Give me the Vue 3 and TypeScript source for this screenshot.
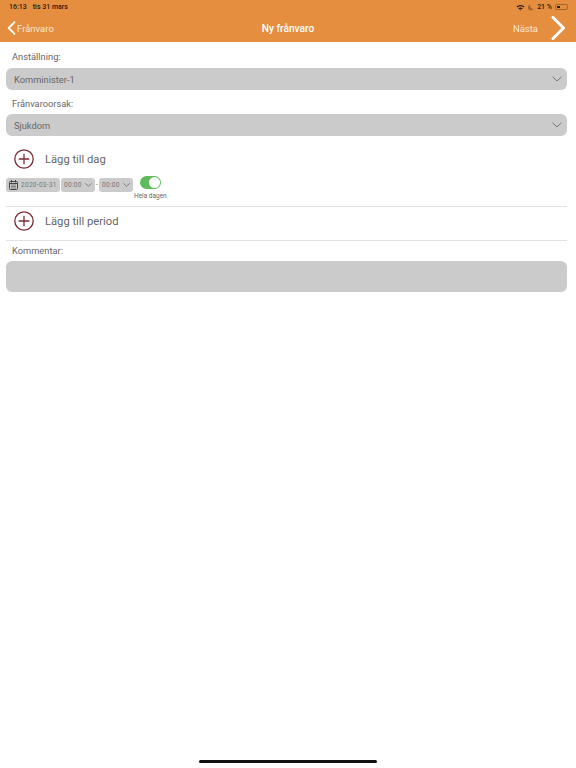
<template>
  <div class="page">
    <header class="header">
      <div class="status">
        <div class="status-left">
          <span>16:13</span>
          <span>tis 31 mars</span>
        </div>
        <div class="status-right">
          <svg class="wifi" width="9" height="7" viewBox="0 0 18 14">
            <path d="M1 5a12 12 0 0 1 16 0l-2 2.2a9 9 0 0 0-12 0z" fill="#222" />
            <path d="M4.6 8.6a7 7 0 0 1 8.8 0l-2 2.2a4 4 0 0 0-4.800 0z" fill="#222" />
            <path d="M7.800 12a2 2 0 0 1 2.400 0L9 13.600z" fill="#222" />
          </svg>
          <svg class="moon" width="6" height="7" viewBox="0 0 12 14">
            <path d="M5 1a6 6 0 1 0 6 9A6.500 6.500 0 0 1 5 1z" fill="#a8652a" />
          </svg>
          <span class="pct">21 %</span>
          <div class="battery"><div class="battery-fill"></div></div>
        </div>
      </div>
      <div class="nav">
        <div class="nav-back">
          <svg width="9" height="14" viewBox="0 0 9 14">
            <path d="M7.500 1.200 1.700 7l5.800 5.800" fill="none" stroke="#fff" stroke-width="1.800" stroke-linecap="round" stroke-linejoin="round" />
          </svg>
          <span>Frånvaro</span>
        </div>
        <div class="nav-title">Ny frånvaro</div>
        <div class="nav-next">
          <span>Nästa</span>
          <svg width="15" height="24" viewBox="0 0 15 24">
            <path d="M2 1.500 12.500 12 2 22.500" fill="none" stroke="#fff" stroke-width="3" stroke-linecap="round" stroke-linejoin="round" />
          </svg>
        </div>
      </div>
    </header>

    <main class="content">
      <label class="field-label first">Anställning:</label>
      <div class="select">
        <span>{{ employment }}</span>
        <svg class="chevron" width="10" height="6" viewBox="0 0 10 6">
          <path d="M.6.8 5 5 9.400.8" fill="none" stroke="#777" stroke-width="1" />
        </svg>
      </div>

      <label class="field-label second">Frånvaroorsak:</label>
      <div class="select">
        <span>{{ reason }}</span>
        <svg class="chevron" width="10" height="6" viewBox="0 0 10 6">
          <path d="M.6.8 5 5 9.400.8" fill="none" stroke="#777" stroke-width="1" />
        </svg>
      </div>

      <div class="add-row add-day">
        <svg class="plus" width="20" height="20" viewBox="0 0 20 20">
          <circle cx="10" cy="10" r="9.200" fill="none" stroke="#7b2c34" stroke-width="1.300" />
          <path d="M10 4.700v10.600M4.700 10h10.600" stroke="#7b2c34" stroke-width="1.300" />
        </svg>
        <span>Lägg till dag</span>
      </div>

      <div class="day-row">
        <div class="chip date-chip">
          <svg width="9" height="10" viewBox="0 0 9 10">
            <rect x=".5" y="1.500" width="8" height="8" rx="1" fill="none" stroke="#444" />
            <path d="M.5 3.500h8" stroke="#444" />
            <path d="M2.500 0v2.500M6.500 0v2.500" stroke="#444" />
            <path d="M2 5h5M2 6.500h5M2 8h5" stroke="#666" stroke-width=".7" />
          </svg>
          <span>2020-03-31</span>
        </div>
        <div class="chip time-chip">
          <span>00:00</span>
          <svg width="7" height="4" viewBox="0 0 7 4"><path d="M.4.4 3.500 3.300 6.600.4" fill="none" stroke="#777" stroke-width=".9" /></svg>
        </div>
        <span class="dash">-</span>
        <div class="chip time-chip">
          <span>00:00</span>
          <svg width="7" height="4" viewBox="0 0 7 4"><path d="M.4.4 3.500 3.300 6.600.4" fill="none" stroke="#777" stroke-width=".9" /></svg>
        </div>
        <div class="toggle-wrap">
          <div class="toggle"><div class="knob"></div></div>
          <span class="toggle-label">Hela dagen</span>
        </div>
      </div>

      <div class="divider"></div>

      <div class="add-row add-period">
        <svg class="plus" width="20" height="20" viewBox="0 0 20 20">
          <circle cx="10" cy="10" r="9.200" fill="none" stroke="#7b2c34" stroke-width="1.300" />
          <path d="M10 4.700v10.600M4.700 10h10.600" stroke="#7b2c34" stroke-width="1.300" />
        </svg>
        <span>Lägg till period</span>
      </div>

      <div class="divider"></div>

      <label class="field-label third">Kommentar:</label>
      <div class="comment"></div>
    </main>

    <div class="home-bar"></div>
  </div>
</template>

<script setup lang="ts">
const employment = 'Komminister-1'
const reason = 'Sjukdom'
</script>

<style scoped>
.page {
  position: relative;
  width: 576px;
  height: 768px;
  display: flex;
  flex-direction: column;
  background: #fff;
  font-family: Roboto, "Liberation Sans", sans-serif;
  overflow: hidden;
}

.header {
  height: 42px;
  background: #e58e3f;
  display: flex;
  flex-direction: column;
  flex-shrink: 0;
}

.status {
  height: 14px;
  padding: 0 8px 0 9px;
  display: flex;
  justify-content: space-between;
  align-items: center;
  font-size: 7px;
  font-weight: 500;
  color: #2a1a0c;
}

.status-left {
  display: flex;
  gap: 6px;
}

.status-right {
  display: flex;
  align-items: center;
  gap: 3px;
}

.battery {
  width: 13px;
  height: 6px;
  border: 1px solid #a8652a;
  border-radius: 2px;
  box-sizing: border-box;
  padding: 1px;
}

.battery-fill {
  width: 3px;
  height: 100%;
  background: #222;
}

.nav {
  flex: 1;
  display: flex;
  align-items: center;
  justify-content: space-between;
  padding: 0 10px 0 7px;
  color: #fff;
  position: relative;
  font-size: 9.500px;
}

.nav-back {
  display: flex;
  align-items: center;
  gap: 1px;
  color: #fbe6d2;
}

.nav-title {
  position: absolute;
  left: 0;
  right: 0;
  text-align: center;
  font-weight: 500;
  font-size: 10.200px;
  pointer-events: none;
}

.nav-next {
  display: flex;
  align-items: center;
  gap: 13px;
  color: #fbe6d2;
}

.content {
  display: flex;
  flex-direction: column;
  padding: 0 9px 0 6px;
}

.field-label {
  font-size: 9.300px;
  line-height: 12px;
  color: #666;
  padding-left: 6px;
}

.first {
  margin-top: 9px;
  margin-bottom: 5px;
}

.second {
  margin-top: 8px;
  margin-bottom: 4px;
}

.third {
  margin-top: 4px;
  margin-bottom: 4px;
}

.select {
  height: 22px;
  background: #cbcbcb;
  border-radius: 6px;
  display: flex;
  align-items: center;
  justify-content: space-between;
  padding: 0 5px 0 8px;
  font-size: 9.300px;
  color: #666;
}

.add-row {
  display: flex;
  align-items: center;
  gap: 11px;
  padding-left: 8px;
  font-size: 11.200px;
  color: #666;
}

.add-day {
  margin-top: 13px;
  height: 20px;
}

.add-period {
  margin-top: 4px;
  margin-bottom: 9px;
  height: 20px;
}

.day-row {
  display: flex;
  align-items: flex-start;
  margin-top: 9px;
  height: 28px;
}

.chip {
  height: 14px;
  background: #cbcbcb;
  border-radius: 3px;
  display: flex;
  align-items: center;
  font-size: 6.500px;
  letter-spacing: 0.3px;
  color: #777;
  box-sizing: border-box;
}

.date-chip {
  width: 54px;
  gap: 3px;
  padding-left: 3px;
  margin-right: 1px;
}

.time-chip {
  width: 34px;
  justify-content: space-between;
  padding: 0 3px;
}

.dash {
  width: 4px;
  text-align: center;
  font-size: 7px;
  line-height: 14px;
  color: #666;
}

.toggle-wrap {
  display: flex;
  flex-direction: column;
  align-items: center;
  margin-left: 1px;
  margin-top: -2px;
  gap: 3px;
}

.toggle {
  width: 21px;
  height: 13px;
  border-radius: 7px;
  background: #5fba5b;
  position: relative;
}

.knob {
  position: absolute;
  right: 1px;
  top: 1px;
  width: 11px;
  height: 11px;
  border-radius: 50%;
  background: #fff;
}

.toggle-label {
  font-size: 6.500px;
  color: #666;
  white-space: nowrap;
}

.divider {
  height: 1px;
  background: #e2e2e2;
}

.comment {
  height: 31px;
  background: #cbcbcb;
  border-radius: 6px;
}

.home-bar {
  position: absolute;
  left: 199px;
  top: 760px;
  width: 178px;
  height: 3px;
  border-radius: 2px;
  background: #111;
}
</style>
